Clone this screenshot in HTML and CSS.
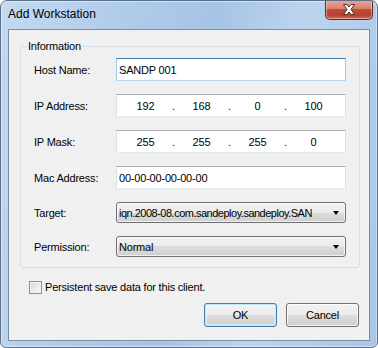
FILE: index.html
```html
<!DOCTYPE html>
<html lang="en">

<head>
  <meta charset="UTF-8" />
  <meta name="viewport" content="width=device-width, initial-scale=1.0" />
  <title>Add Workstation</title>
  <link rel="stylesheet" href="styles.css">
</head>

<body>
  <div class="window">
    <div class="titlebar">
      <span class="title">Add Workstation</span>
      <button class="close" aria-label="Close">
        <svg width="14" height="11" viewBox="0 0 14 11">
          <path d="M1.5 0.5 H5 L7 3 L9 0.5 H12.5 L9 5.5 L12.5 10.5 H9 L7 8 L5 10.5 H1.5 L5 5.5 Z" fill="#fff" stroke="#4a2d28" stroke-width="1" stroke-linejoin="round" />
        </svg>
      </button>
    </div>

    <div class="client">
      <fieldset class="group">
        <legend>Information</legend>
        <div class="rows">
          <div class="row">
            <span class="label">Host Name:</span>
            <div class="textbox focused">SANDP 001</div>
          </div>
          <div class="row">
            <span class="label">IP Address:</span>
            <div class="textbox ip">
              <span class="octet">192</span><span class="dot">.</span>
              <span class="octet">168</span><span class="dot">.</span>
              <span class="octet">0</span><span class="dot">.</span>
              <span class="octet">100</span>
            </div>
          </div>
          <div class="row">
            <span class="label">IP Mask:</span>
            <div class="textbox ip">
              <span class="octet">255</span><span class="dot">.</span>
              <span class="octet">255</span><span class="dot">.</span>
              <span class="octet">255</span><span class="dot">.</span>
              <span class="octet">0</span>
            </div>
          </div>
          <div class="row">
            <span class="label">Mac Address:</span>
            <div class="textbox">00-00-00-00-00-00</div>
          </div>
          <div class="row">
            <span class="label">Target:</span>
            <div class="combo">
              <span class="combo-text tight">iqn.2008-08.com.sandeploy.sandeploy.SAN</span>
              <span class="arrow"></span>
            </div>
          </div>
          <div class="row">
            <span class="label">Permission:</span>
            <div class="combo">
              <span class="combo-text">Normal</span>
              <span class="arrow"></span>
            </div>
          </div>
        </div>
      </fieldset>

      <label class="check">
        <span class="box"></span>
        Persistent save data for this client.
      </label>

      <div class="buttons">
        <button class="btn default">OK</button>
        <button class="btn">Cancel</button>
      </div>
    </div>
  </div>
</body>

</html>
```

FILE: styles.css
```css
* {
  box-sizing: border-box;
}

body {
  margin: 0;
  background: #fff;
  font-family: "Liberation Sans", Arial, sans-serif;
  font-size: 11px;
  letter-spacing: -0.2px;
  color: #000;
}

/* window frame */
.window {
  width: 378px;
  height: 348px;
  border: 1px solid #5d6f86;
  border-radius: 7px 7px 6px 6px;
  padding: 0 7px 6px 7px;
  display: flex;
  flex-direction: column;
  background: linear-gradient(100deg, #c3d9f0 0%, #afcbea 30%, #a6c4e6 50%, #bcd4ee 70%, #a9c6e7 100%);
  box-shadow: inset 0 0 0 1px rgba(255, 255, 255, 0.45);
  overflow: hidden;
}

.titlebar {
  height: 28px;
  display: flex;
  align-items: flex-start;
}

.title {
  margin-top: 6px;
  font-size: 12px;
  line-height: 15px;
  letter-spacing: 0;
}

.close {
  margin: -1px -3px 0 auto;
  width: 48px;
  height: 20px;
  padding: 0;
  border: 1px solid #54302a;
  border-top: none;
  border-radius: 0 0 5px 5px;
  background: linear-gradient(#e9a899 0%, #d9806f 45%, #c04c38 50%, #b8402e 80%, #d2705a 100%);
  box-shadow: inset 0 0 0 1px rgba(255, 220, 210, 0.5);
  display: flex;
  align-items: center;
  justify-content: center;
}

.close svg {
  display: block;
}

/* client area */
.client {
  flex: 1;
  border: 1px solid #7b8ea6;
  background: #f0f0f0;
  display: flex;
  flex-direction: column;
}

.group {
  margin: 10px 9px 0 11px;
  padding: 0 13px 10px 6px;
  border: 1px solid #d5dfe5;
  border-radius: 3px;
  min-width: 0;
}

.group legend {
  padding: 0 1px;
  line-height: 13px;
}

.rows {
  margin: 5px 0 0 7px;
  display: flex;
  flex-direction: column;
  gap: 13px;
}

.row {
  display: grid;
  grid-template-columns: 82px 1fr;
  align-items: center;
}

.textbox {
  height: 23px;
  padding: 0 2px;
  background: #fff;
  border: 1px solid #dbdfe6;
  border-top-color: #abadb3;
  border-bottom-color: #e3e9ef;
  display: flex;
  align-items: center;
}

.textbox.focused {
  border-color: #a4c9e3;
  border-top-color: #3d7bad;
  border-bottom-color: #b7d9ed;
}

.textbox.ip {
  padding-left: 7px;
}

.octet {
  width: 43px;
  text-align: center;
}

.dot {
  width: 13px;
  text-align: center;
}

.combo {
  height: 21px;
  padding: 0 6px 0 2px;
  border: 1px solid #707070;
  border-radius: 3px;
  background: linear-gradient(#f2f2f2 0%, #ebebeb 50%, #dddddd 50%, #cfcfcf 100%);
  box-shadow: inset 0 0 0 1px rgba(255, 255, 255, 0.7);
  display: flex;
  align-items: center;
}

.combo-text {
  flex: 1;
  overflow: hidden;
  white-space: nowrap;
}

.combo-text.tight {
  letter-spacing: -0.5px;
}

.arrow {
  width: 0;
  height: 0;
  border-left: 3.5px solid transparent;
  border-right: 3.5px solid transparent;
  border-top: 4px solid #000;
}

/* footer */
.check {
  margin: 13px 0 0 20px;
  display: flex;
  align-items: center;
  gap: 3px;
  line-height: 13px;
}

.check .box {
  width: 13px;
  height: 13px;
  border: 1px solid #8e8f8f;
  background: linear-gradient(135deg, #d8d8d8, #fbfbfb);
  box-shadow: inset 0 0 0 1px #f4f4f4;
}

.buttons {
  margin: 9px 10px 0 0;
  display: flex;
  justify-content: flex-end;
  gap: 9px;
}

.btn {
  width: 73px;
  height: 24px;
  padding: 0;
  font-family: inherit;
  font-size: 11px;
  letter-spacing: -0.2px;
  color: #000;
  border: 1px solid #707070;
  border-radius: 3px;
  background: linear-gradient(#f2f2f2 0%, #ebebeb 50%, #dddddd 50%, #cfcfcf 100%);
  box-shadow: inset 0 0 0 1px rgba(255, 255, 255, 0.8);
}

.btn.default {
  border-color: #3c7fb1;
  box-shadow: inset 0 0 0 1px #bfe7fb, inset 0 0 0 2px rgba(255, 255, 255, 0.4);
}
```
